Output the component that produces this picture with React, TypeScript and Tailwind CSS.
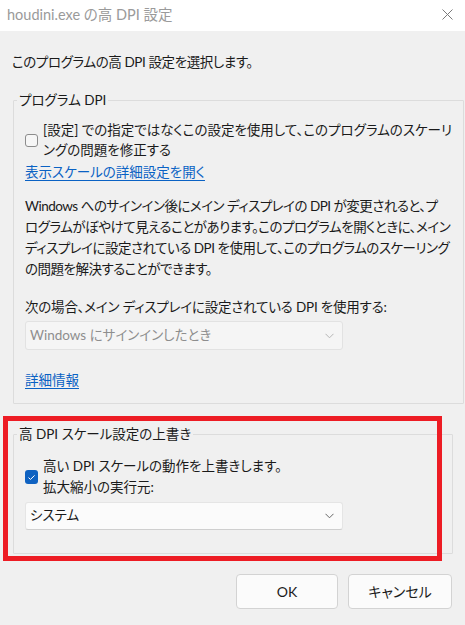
import React from "react";

const font = "[font-family:Lato,'Noto_Sans_CJK_JP',sans-serif] [font-feature-settings:'palt']";

function Chevron({ color }: { color: string }) {
  return (
    <svg width="9" height="6" viewBox="0 0 9 6" fill="none">
      <path d="M0.5 0.8 L4.5 4.8 L8.5 0.8" stroke={color} strokeWidth="1" />
    </svg>
  );
}

function Checkbox({ checked }: { checked?: boolean }) {
  if (checked) {
    return (
      <div className="w-[13px] h-[14px] rounded-[3px] bg-[#0f62c1] flex items-center justify-center shrink-0">
        <svg width="9" height="7" viewBox="0 0 9 7" fill="none">
          <path d="M1.5 3.6 L3.5 5.4 L7.6 1.4" stroke="white" strokeWidth="1" />
        </svg>
      </div>
    );
  }
  return <div className="w-[13px] h-[13px] rounded-[3px] border border-[#8c8c8c] bg-[#f6f6f6] shrink-0" />;
}

export default function App() {
  return (
    <div className={`w-[465px] h-[625px] bg-[#f0f0f0] flex flex-col text-[13.5px] text-[#1a1a1a] ${font} relative overflow-hidden`}>
      {/* title bar */}
      <div className="h-[31px] bg-white flex items-center justify-between pl-[7px] pr-[12px] shrink-0">
        <span className="text-[14.5px] text-[#9a9a9a] leading-none">houdini.exe の高 DPI 設定</span>
        <svg width="11" height="11" viewBox="0 0 11 11" fill="none" className="mb-[3px]">
          <path d="M0.5 0.5 L10.5 10.5 M10.5 0.5 L0.5 10.5" stroke="#7a7a7a" strokeWidth="1" />
        </svg>
      </div>

      <div className="pl-[13px] pr-[12px] pt-[21px] flex flex-col">
        <p className="leading-[20px] ml-[-1px] tracking-[-0.4px]">このプログラムの高 DPI 設定を選択します。</p>

        <fieldset className="mt-[18px] border border-[#dcdcdc] rounded-[1px] px-[11px] pb-[13px] m-0">
          <legend className="ml-[-8px] px-[2px] leading-[20px]">プログラム DPI</legend>
          <div className="mt-[10px] flex items-center gap-[5px]">
            <Checkbox />
            <span className="leading-[20px] whitespace-nowrap">
              [設定] での指定ではなくこの設定を使用して、このプログラムのスケーリ
              <br />
              ングの問題を修正する
            </span>
          </div>
          <a className="block mt-[2px] leading-[20px] text-[#0a62c4] underline underline-offset-[3px] w-fit cursor-pointer">
            表示スケールの詳細設定を開く
          </a>
          <p className="mt-[14px] leading-[21px] whitespace-nowrap tracking-[-0.5px]">
            Windows へのサインイン後にメイン ディスプレイの DPI が変更されると、プ
            <br />
            ログラムがぼやけて見えることがあります。このプログラムを開くときに、メイン
            <br />
            ディスプレイに設定されている DPI を使用して、このプログラムのスケーリング
            <br />
            の問題を解決することができます。
          </p>
          <p className="mt-[17px] leading-[20px] whitespace-nowrap tracking-[-0.2px]">次の場合、メイン ディスプレイに設定されている DPI を使用する:</p>
          <div className="mt-[4px] w-[318px] h-[29px] bg-[#f5f5f5] border border-[#e2e2e2] rounded-[3px] flex items-center justify-between pl-[4px] pr-[8px] text-[#8e8e8e]">
            <span className="leading-none">Windows にサインインしたとき</span>
            <Chevron color="#b5b5b5" />
          </div>
          <a className="block mt-[20px] leading-[20px] text-[#0a62c4] underline underline-offset-[3px] w-fit cursor-pointer">詳細情報</a>
        </fieldset>

        <fieldset className="mt-[20px] border border-[#dcdcdc] rounded-[1px] px-[11px] pb-[23px] m-0">
          <legend className="ml-[-8px] px-[2px] leading-[20px]">高 DPI スケール設定の上書き</legend>
          <div className="mt-[12px] flex items-center gap-[5px]">
            <Checkbox checked />
            <span className="leading-[21px] whitespace-nowrap">
              高い DPI スケールの動作を上書きします。
              <br />
              拡大縮小の実行元:
            </span>
          </div>
          <div className="mt-[4px] w-[318px] h-[28px] bg-[#fbfbfb] border border-[#e5e5e5] border-b-[#cfcfcf] rounded-[3px] flex items-center justify-between pl-[4px] pr-[8px]">
            <span className="leading-none">システム</span>
            <Chevron color="#666666" />
          </div>
        </fieldset>

        <div className="mt-[20px] flex justify-end gap-[10px] pr-[1px]">
          <button className="w-[102px] h-[35px] bg-[#fbfbfb] border border-[#d3d3d3] rounded-[4px] text-[14px] text-[#1a1a1a]">OK</button>
          <button className="w-[104px] h-[35px] bg-[#fbfbfb] border border-[#d3d3d3] rounded-[4px] text-[14px] text-[#1a1a1a]">キャンセル</button>
        </div>
      </div>

      {/* red annotation frame */}
      <div className="absolute left-[3px] top-[416px] w-[439px] h-[145px] border-[5px] border-[#ed1c24] pointer-events-none" />
    </div>
  );
}
